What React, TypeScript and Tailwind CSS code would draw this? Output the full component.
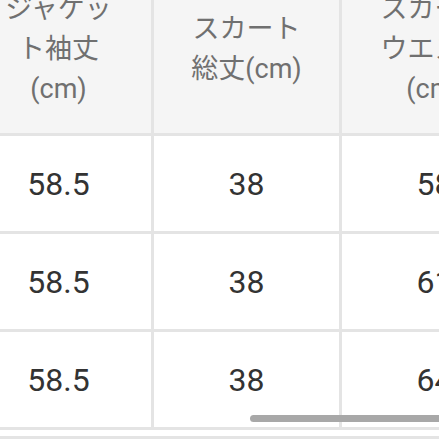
import React from "react";

const headers = ["ジャケット袖丈(cm)", "スカート総丈(cm)", "スカートウエスト(cm)"];
const rows = [
  ["58.5", "38", "58"],
  ["58.5", "38", "61"],
  ["58.5", "38", "64"],
];

export default function App() {
  return (
    <div
      className="relative w-[439px] h-[439px] overflow-hidden bg-white"
      style={{ fontFamily: "Roboto, 'Noto Sans CJK JP', sans-serif" }}
    >
      <div className="-mt-[35px] -ml-[34px] w-max">
        <div className="flex h-[171px] bg-[#f5f5f5] border-b-[3px] border-[#e4e4e4]">
          {headers.map((h, i) => (
            <div
              key={i}
              className="w-[188px] border-r-[3px] border-[#e4e4e4] flex items-center justify-center"
            >
              <div className="w-[118px] text-center text-[27px] leading-[40px] text-[#707070]">
                {h}
              </div>
            </div>
          ))}
        </div>
        {rows.map((r, ri) => (
          <div key={ri} className="flex h-[98px] border-b-[3px] border-[#e4e4e4] bg-white">
            {r.map((c, ci) => (
              <div
                key={ci}
                className="w-[188px] border-r-[3px] border-[#e4e4e4] flex items-center justify-center text-[32px] text-[#333333]"
              >
                {c}
              </div>
            ))}
          </div>
        ))}
        <div className="mt-[6px] h-[3px] bg-[#e4e4e4]" />
      </div>
      <div className="absolute left-[250px] top-[415px] w-[200px] h-[7px] rounded-full bg-[#a8a8a8]" />
    </div>
  );
}
